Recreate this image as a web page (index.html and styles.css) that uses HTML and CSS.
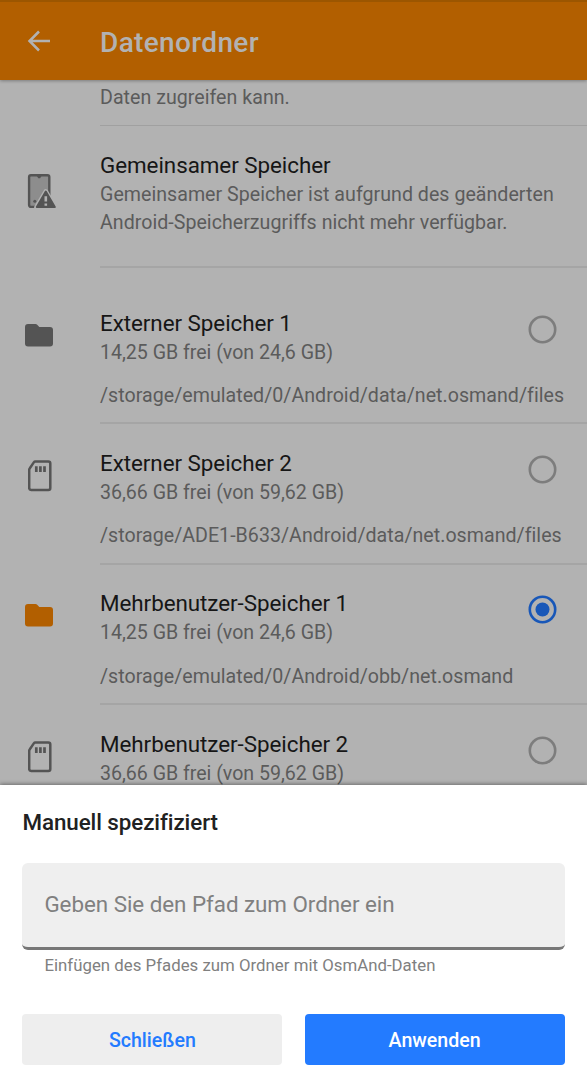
FILE: index.html
```html
<!DOCTYPE html>
<html lang="de">
<head>
  <meta charset="UTF-8">
  <meta name="viewport" content="width=device-width, initial-scale=1.0">
  <title>Datenordner</title>
  <link rel="stylesheet" href="styles.css">
</head>
<body>

  <!-- Icons shared by the rows -->
  <svg class="icon-defs" width="0" height="0">
    <symbol id="folder" viewBox="0 0 28 23">
      <path d="M3 0H10.5Q11.5 0 12.2 .8L14.3 3H25Q28 3 28 6V19.5Q28 22.5 25 22.5H3Q0 22.5 0 19.5V3Q0 0 3 0Z" fill="currentColor"/>
    </symbol>
    <symbol id="sdcard" viewBox="0 0 24 32">
      <path d="M7.4 1.5H20.3Q22.3 1.5 22.3 3.5V28Q22.3 30 20.3 30H3.2Q1.2 30 1.2 28V10Q1.2 9 1.8 8.2L5.8 2.4Q6.4 1.5 7.4 1.5Z" fill="none" stroke="currentColor" stroke-width="2.5"/>
      <path d="M8.3 6.2V12M12.4 6.2V12M16.5 6.2V12" fill="none" stroke="currentColor" stroke-width="2.7"/>
    </symbol>
    <symbol id="radio" viewBox="0 0 29 29">
      <circle cx="14.5" cy="14.5" r="12.7" fill="none" stroke="currentColor" stroke-width="2.6"/>
    </symbol>
    <symbol id="radio-checked" viewBox="0 0 29 29">
      <circle cx="14.5" cy="14.5" r="12.7" fill="none" stroke="currentColor" stroke-width="2.6"/>
      <circle cx="14.5" cy="14.5" r="7" fill="currentColor"/>
    </symbol>
  </svg>

  <header class="toolbar">
    <svg class="back" viewBox="0 0 24 22" width="24" height="22">
      <path d="M23 11H2.5M12 1.5L2.5 11L12 20.5" fill="none" stroke="currentColor" stroke-width="2.5"/>
    </svg>
    <h1>Datenordner</h1>
  </header>

  <main class="list">
    <div class="intro">Daten zugreifen kann.</div>

    <div class="row shared">
      <div class="icon">
        <svg class="phone" viewBox="0 0 30 36" width="30" height="36">
          <rect x="2.1" y="2.3" width="20.2" height="31.6" rx="1.8" fill="#8d8d8d" stroke="#545454" stroke-width="2.4"/>
          <path d="M9.9 3H14.5L13.1 5.2H11.3Z" fill="#545454"/>
          <circle cx="7.8" cy="28.2" r="1.5" fill="#545454"/>
          <path d="M18.8 18.5L28 34.4H9.4Z" fill="#b2b2b2" stroke="#b2b2b2" stroke-width="4.6" stroke-linejoin="round"/>
          <path d="M18.8 18.6L27.8 34.1H9.8Z" fill="#545454" stroke="#545454" stroke-width="2" stroke-linejoin="round"/>
          <path d="M18.8 23.2V28.6M18.8 30.4V32.8" stroke="#b2b2b2" stroke-width="2.6"/>
        </svg>
      </div>
      <div class="info">
        <h2>Gemeinsamer Speicher</h2>
        <p>Gemeinsamer Speicher ist aufgrund des geänderten<br>Android-Speicherzugriffs nicht mehr verfügbar.</p>
      </div>
    </div>

    <div class="row">
      <div class="icon"><svg class="folder"><use href="#folder"/></svg></div>
      <div class="info">
        <h2>Externer Speicher 1</h2>
        <p class="free">14,25 GB frei (von 24,6 GB)</p>
        <p class="path">/storage/emulated/0/Android/data/net.osmand/files</p>
        <svg class="radio"><use href="#radio"/></svg>
      </div>
    </div>

    <div class="row">
      <div class="icon"><svg class="sdcard"><use href="#sdcard"/></svg></div>
      <div class="info">
        <h2>Externer Speicher 2</h2>
        <p class="free">36,66 GB frei (von 59,62 GB)</p>
        <p class="path">/storage/ADE1-B633/Android/data/net.osmand/files</p>
        <svg class="radio"><use href="#radio"/></svg>
      </div>
    </div>

    <div class="row">
      <div class="icon"><svg class="folder selected"><use href="#folder"/></svg></div>
      <div class="info">
        <h2>Mehrbenutzer-Speicher 1</h2>
        <p class="free">14,25 GB frei (von 24,6 GB)</p>
        <p class="path">/storage/emulated/0/Android/obb/net.osmand</p>
        <svg class="radio checked"><use href="#radio-checked"/></svg>
      </div>
    </div>

    <div class="row">
      <div class="icon"><svg class="sdcard"><use href="#sdcard"/></svg></div>
      <div class="info">
        <h2>Mehrbenutzer-Speicher 2</h2>
        <p class="free">36,66 GB frei (von 59,62 GB)</p>
        <svg class="radio"><use href="#radio"/></svg>
      </div>
    </div>
  </main>

  <section class="sheet">
    <h3>Manuell spezifiziert</h3>
    <div class="field">Geben Sie den Pfad zum Ordner ein</div>
    <div class="hint">Einfügen des Pfades zum Ordner mit OsmAnd-Daten</div>
    <div class="buttons">
      <button class="btn">Schließen</button>
      <button class="btn primary">Anwenden</button>
    </div>
  </section>

</body>
</html>
```
FILE: styles.css
```css
* {
  box-sizing: border-box;
}

body {
  margin: 0;
  height: 1080px;
  display: flex;
  flex-direction: column;
  overflow: hidden;
  font-family: Roboto, sans-serif;
  background: #b2b2b2;
}

h1, h2, h3, p {
  margin: 0;
}

.icon-defs {
  position: absolute;
}

/* Toolbar */
.toolbar {
  flex: none;
  height: 80px;
  padding: 4px 0 0 27px;
  display: flex;
  align-items: center;
  background: #b25f00;
  border-top: 2px solid #9c5600;
  box-shadow: 0 1px 3px rgba(0, 0, 0, 0.3);
  color: #b2b2b2;
  z-index: 1;
}

.back {
  width: 24px;
  margin: -5px 49px 0 0;
}

.toolbar h1 {
  font-size: 28px;
  font-weight: 500;
  line-height: 34px;
  letter-spacing: 0.35px;
}

/* Storage list */
.list {
  flex: 1;
  min-height: 0;
  overflow: hidden;
  color: #5b5b5b;
  font-size: 19.6px;
  letter-spacing: 0.03px;
}

.intro {
  height: 46px;
  margin-left: 100px;
  padding-top: 4px;
  line-height: 28px;
  border-bottom: 1.5px solid #a0a0a0;
}

.row {
  height: 140.4px;
  display: flex;
}

.row.shared {
  height: 142px;
  margin-bottom: 16px;
}

.icon {
  width: 100px;
  padding: 39.5px 0 0 25px;
}

.icon svg {
  display: block;
  color: #545454;
}

.icon .folder {
  width: 28px;
  height: 23px;
}

.icon .sdcard {
  width: 24px;
  height: 32px;
  margin: -4px 0 0 3px;
}

.icon .selected {
  color: #b25f00;
}

.icon .phone {
  margin: 7.5px 0 0 2px;
}

.info {
  flex: 1;
  position: relative;
  padding-top: 24.5px;
  border-bottom: 2px solid #a5a5a5;
  white-space: nowrap;
}

.info h2 {
  font-size: 22.4px;
  font-weight: 400;
  line-height: 28px;
  letter-spacing: -0.05px;
  color: #161616;
}

.info p {
  line-height: 28px;
}

.shared p {
  margin-top: 2px;
}

.info .free {
  margin-top: 1px;
  line-height: 30px;
  letter-spacing: -0.02px;
}

.info .path {
  margin-top: 14.5px;
}

.radio {
  position: absolute;
  top: 30.5px;
  right: 30px;
  width: 29px;
  height: 29px;
  color: #7d7d7d;
}

.radio.checked {
  color: #1857b8;
}

/* Bottom sheet */
.sheet {
  flex: none;
  height: 295px;
  padding: 23px 22.4px 0;
  background: #fff;
  box-shadow: 0 -1px 4px rgba(0, 0, 0, 0.4);
  z-index: 1;
}

.sheet h3 {
  font-size: 22.4px;
  font-weight: 500;
  line-height: 29px;
  letter-spacing: -0.08px;
  color: #212121;
}

.field {
  height: 87px;
  margin-top: 26px;
  padding-left: 22px;
  line-height: 83px;
  font-size: 22.4px;
  letter-spacing: -0.04px;
  color: #808080;
  background: #efefef;
  border-bottom: 3px solid #777;
  border-radius: 6px;
}

.hint {
  padding: 3px 0 0 22px;
  font-size: 16.8px;
  line-height: 24px;
  letter-spacing: 0.02px;
  color: #808080;
}

.buttons {
  margin-top: 37px;
  display: grid;
  grid-template-columns: 1fr 1fr;
  gap: 22.4px;
}

.btn {
  height: 51px;
  padding: 1px 0 0;
  border: none;
  border-radius: 4px;
  font: 500 19.6px Roboto, sans-serif;
  color: #237bff;
  background: #eee;
}

.btn.primary {
  color: #fff;
  background: #237bff;
}
```
